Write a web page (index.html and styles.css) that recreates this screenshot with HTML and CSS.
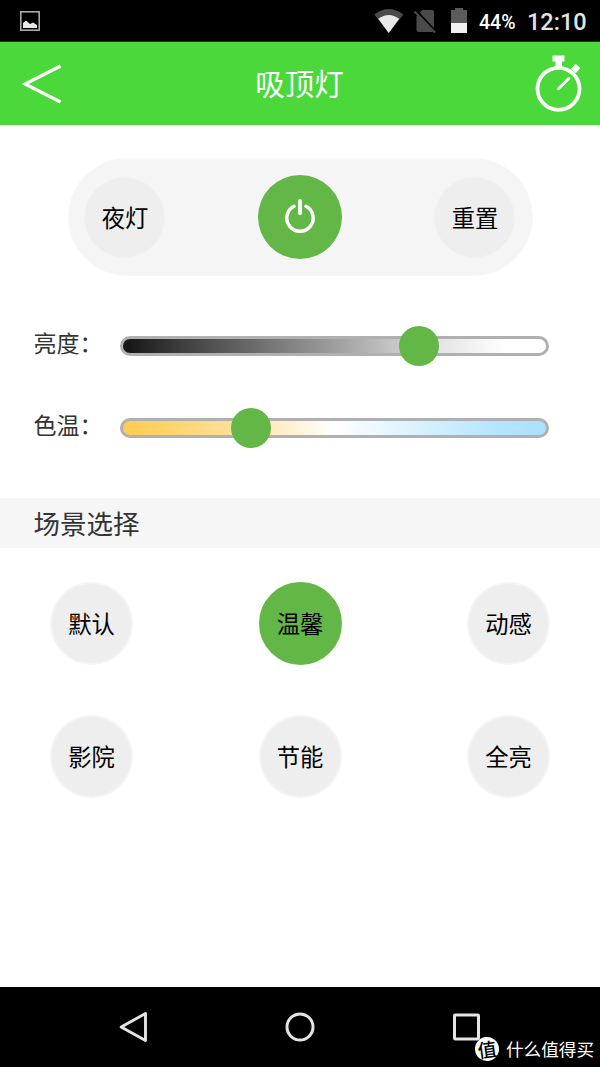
FILE: index.html
```html
<!DOCTYPE html>
<html lang="zh-CN">
  <head>
    <meta charset="UTF-8" />
    <meta name="viewport" content="width=device-width, initial-scale=1.0" />
    <title>吸顶灯</title>
    <link rel="stylesheet" href="styles.css">
  </head>
  <body>
    <!-- 状态栏 -->
    <div class="status-bar">
      <svg class="icon-picture" width="20" height="20" viewBox="0 0 20 20">
        <rect x="0.8" y="0.8" width="18.4" height="18.4" fill="none" stroke="#b4b4b4" stroke-width="1.5" />
        <path d="M3 17V12L6 9.5L10 13L13 11.5L17 14V17Z" fill="#e6e6e6" />
      </svg>
      <div class="status-right">
        <svg class="icon-wifi" width="30" height="24" viewBox="0 0 30 24">
          <path d="M0.3 5.5Q14.7 -5.5 29.4 5.5L14.7 24Z" fill="#4a4a4a" />
          <path d="M4.3 9.8Q14.7 2.2 25.2 9.8L14.7 24Z" fill="#e9e9e9" />
        </svg>
        <svg class="icon-sim" width="22" height="24" viewBox="0 0 22 24">
          <path d="M8.5 1H18Q20 1 20 3V21Q20 23 18 23H4.5Q2.5 23 2.5 21V7Z" fill="#4a4a4a" />
          <path d="M1.5 1.3L21.5 22.8" stroke="#000" stroke-width="3" />
          <path d="M0.6 2.5L21 23.5" stroke="#4a4a4a" stroke-width="1.8" />
        </svg>
        <svg class="icon-battery" width="16" height="25" viewBox="0 0 16 25">
          <path d="M4 0H12V2H16V15H0V2H4Z" fill="#5b5b5b" />
          <path d="M0 15H16V25H0Z" fill="#f0f0f0" />
        </svg>
        <span class="battery-text">44%</span>
        <span class="clock">12:10</span>
      </div>
    </div>

    <!-- 标题栏 -->
    <header class="header">
      <svg class="icon-back" width="40" height="40" viewBox="0 0 40 40">
        <path d="M38.5 2L3 20L38.5 38" fill="none" stroke="#fff" stroke-width="3.2" />
      </svg>
      <h1 class="title">吸顶灯</h1>
      <svg class="icon-timer" width="48" height="58" viewBox="0 0 48 58">
        <circle cx="23.5" cy="33.8" r="21" fill="none" stroke="#fff" stroke-width="3.8" />
        <path d="M17.5 0.5H29.5V6.5H27V12.5H20.5V6.5H17.5Z" fill="#fff" />
        <rect x="37.5" y="10" width="6.5" height="7" rx="1" transform="rotate(42 40.7 13.5)" fill="#fff" />
        <path d="M23.5 33.8L34 23.3" stroke="#fff" stroke-width="2.8" stroke-linecap="round" />
      </svg>
    </header>

    <main class="main">
      <!-- 开关 -->
      <section class="control-panel">
        <button class="round-btn panel-btn">夜灯</button>
        <button class="round-btn power-btn" aria-label="开关">
          <svg width="32" height="36" viewBox="0 0 32 36">
            <path d="M10 7.3A13.2 13.2 0 1 0 22 7.3" fill="none" stroke="#fff" stroke-width="3.4" stroke-linecap="round" />
            <path d="M16 2V14.2" stroke="#fff" stroke-width="3.8" stroke-linecap="round" />
          </svg>
        </button>
        <button class="round-btn panel-btn">重置</button>
      </section>

      <!-- 滑块 -->
      <section class="sliders">
        <div class="slider-row">
          <span class="slider-label">亮度：</span>
          <div class="slider brightness">
            <div class="thumb" style="left: 69.9%"></div>
          </div>
        </div>
        <div class="slider-row">
          <span class="slider-label">色温：</span>
          <div class="slider temperature">
            <div class="thumb" style="left: 30.3%"></div>
          </div>
        </div>
      </section>

      <!-- 场景 -->
      <h2 class="scene-title">场景选择</h2>
      <section class="scene-list">
        <button class="round-btn">默认</button>
        <button class="round-btn active">温馨</button>
        <button class="round-btn">动感</button>
        <button class="round-btn">影院</button>
        <button class="round-btn">节能</button>
        <button class="round-btn">全亮</button>
      </section>
    </main>

    <!-- 导航栏 -->
    <nav class="nav-bar">
      <svg width="34" height="34" viewBox="0 0 34 34">
        <path d="M29.5 3.5V30.5L5.2 17Z" fill="none" stroke="#e4e4e4" stroke-width="2.9" stroke-linejoin="round" />
      </svg>
      <svg width="34" height="34" viewBox="0 0 34 34">
        <circle cx="17" cy="17" r="13" fill="none" stroke="#e4e4e4" stroke-width="3" />
      </svg>
      <svg width="34" height="34" viewBox="0 0 34 34">
        <rect x="5.5" y="5" width="24" height="24" rx="0.8" fill="none" stroke="#e4e4e4" stroke-width="3" />
      </svg>
      <div class="watermark">
        <span class="watermark-logo">值</span>
        <span>什么值得买</span>
      </div>
    </nav>
  </body>
</html>
```

FILE: styles.css
```css
* {
  box-sizing: border-box;
}

body {
  margin: 0;
  height: 1067px;
  display: flex;
  flex-direction: column;
  background-color: #fff;
  font-family: "Noto Sans CJK SC", sans-serif;
  overflow: hidden;
}

svg {
  display: block;
  flex-shrink: 0;
}

/* 状态栏 */
.status-bar {
  display: flex;
  justify-content: space-between;
  height: 42px;
  padding: 0 14px 0 20px;
  background-color: #000;
  border-bottom: 1px solid #17460f;
}

.icon-picture {
  margin-top: 11px;
}

.status-right {
  display: flex;
  align-items: center;
  color: #fff;
  font-family: Roboto, sans-serif;
  font-weight: 500;
}

.icon-wifi {
  margin-right: 10px;
}

.icon-sim {
  margin-right: 15px;
}

.icon-battery {
  margin-right: 12px;
}

.battery-text {
  width: 48px;
  padding-top: 3px;
  font-size: 19.5px;
}

.clock {
  width: 59px;
  padding-top: 2px;
  color: #e4e4e4;
  font-size: 23.5px;
  white-space: nowrap;
}

/* 标题栏 */
.header {
  display: flex;
  align-items: center;
  justify-content: space-between;
  height: 83px;
  padding: 0 17px 0 22px;
  background-color: #4bd83b;
}

.title {
  margin: -4px 0 0 2px;
  color: #fff;
  font-size: 29.5px;
  font-weight: 400;
  line-height: 40px;
}

.main {
  flex: 1;
}

/* 圆形按钮 */
.round-btn {
  display: flex;
  align-items: center;
  justify-content: center;
  width: 83px;
  height: 83px;
  padding: 0 0 1px;
  border: 2px solid #f5f5f5;
  border-radius: 50%;
  background-color: #eee;
  color: #000;
  font-family: inherit;
  font-size: 23.3px;
  line-height: 34px;
}

.round-btn.active {
  border-color: #62b947;
  background-color: #62b747;
}

.control-panel {
  display: flex;
  align-items: center;
  justify-content: space-between;
  width: 465px;
  height: 118px;
  margin: 33px auto 0 68px;
  padding: 0 17px 0 15px;
  border: 1px solid #f8f8f8;
  border-radius: 59px;
  background-color: #f5f5f5;
}

.panel-btn {
  width: 81px;
  height: 81px;
  padding-left: 1px;
  border: 1px solid #f2f2f2;
}

.power-btn {
  width: 84px;
  height: 84px;
  padding: 0;
  border: none;
  background-color: #62b747;
}

/* 滑块 */
.sliders {
  display: flex;
  flex-direction: column;
  gap: 42px;
  padding: 50px 51px 0 34px;
}

.slider-row {
  display: flex;
  align-items: center;
  height: 40px;
}

.slider-label {
  width: 86px;
  margin-top: -9px;
  color: #333;
  font-size: 23px;
  line-height: 34px;
  text-indent: -0.5px;
  white-space: nowrap;
}

.slider {
  position: relative;
  flex: 1;
  height: 20px;
  border: 3px solid #b0b0b2;
  border-radius: 10px;
  background-origin: border-box;
}

.brightness {
  background-image: linear-gradient(to right, #181818 2%, #404040 15%, #999 48%, #e5e5e5 75%, #fff 90%);
}

.temperature {
  background-image: linear-gradient(to right, #ffcd56 3%, #ffe09a 27%, #fff 50%, #b4e5ff 88%, #a9e1ff);
}

.thumb {
  position: absolute;
  top: 50%;
  width: 40px;
  height: 40px;
  border-radius: 50%;
  background-color: #62b747;
  transform: translate(-50%, -50%);
}

/* 场景 */
.scene-title {
  height: 50px;
  margin: 50px 0 0;
  padding-left: 33.5px;
  background-color: #f6f6f6;
  color: #333;
  font-size: 26.5px;
  font-weight: 400;
  line-height: 49px;
}

.scene-list {
  display: grid;
  grid-template-columns: repeat(3, 83px);
  justify-content: space-between;
  row-gap: 50.5px;
  padding: 33.5px 50px 0;
}

/* 导航栏 */
.nav-bar {
  position: relative;
  display: flex;
  justify-content: space-between;
  height: 80px;
  padding: 23px 117px 0 116px;
  background-color: #000;
}

.watermark {
  position: absolute;
  right: 6px;
  bottom: 6px;
  display: flex;
  align-items: center;
  gap: 7px;
  color: #fff;
  font-size: 17.6px;
  line-height: 24px;
}

.watermark-logo {
  width: 24px;
  height: 24px;
  border-radius: 50%;
  background-color: #fff;
  color: #000;
  font-size: 19px;
  font-weight: 500;
  line-height: 23px;
  text-align: center;
  transform: rotate(-8deg);
}
```
